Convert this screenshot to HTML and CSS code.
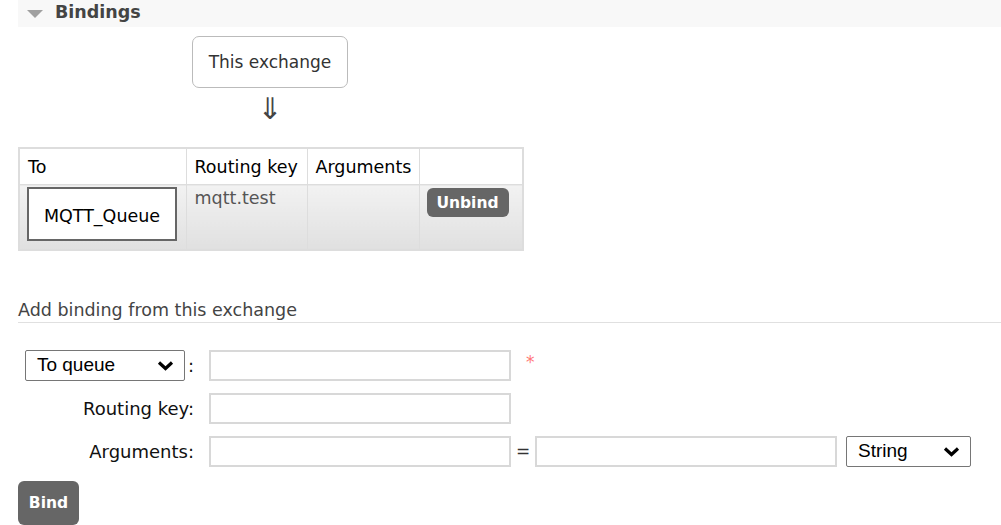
FILE: index.html
```html
<!DOCTYPE html>
<html>
<head>
<meta charset="utf-8">
<link rel="stylesheet" href="styles.css">
</head>
<body>
<div class="page">
  <div class="section-header">
    <span class="tri"></span>
    <h2>Bindings</h2>
  </div>
  <div class="diagram">
    <div class="this-exchange">This exchange</div>
    <div class="arrow">&#8659;</div>
  </div>
  <table class="bindings">
    <colgroup><col class="c-to"><col class="c-key"><col class="c-args"><col class="c-act"></colgroup>
    <thead>
      <tr><th>To</th><th>Routing key</th><th>Arguments</th><th></th></tr>
    </thead>
    <tbody>
      <tr>
        <td class="to-cell"><div class="queue-box">MQTT_Queue</div></td>
        <td class="key">mqtt.test</td>
        <td></td>
        <td class="act"><button class="btn small">Unbind</button></td>
      </tr>
    </tbody>
  </table>
  <h3 class="sub">Add binding from this exchange</h3>
  <div class="form">
    <div class="lbl"><div class="select w160"><span>To queue</span><svg class="chev" width="17" height="11" viewBox="0 0 17 11"><path d="M2 2.5 L8.5 8.5 L15 2.5" fill="none" stroke="#000" stroke-width="3.2"/></svg></div><span class="colon">:</span></div>
    <div class="field"><input class="txt" type="text"><span class="req">*</span></div>
    <div class="lbl">Routing key:</div>
    <div class="field"><input class="txt" type="text"></div>
    <div class="lbl">Arguments:</div>
    <div class="field"><input class="txt" type="text"><span class="eq">=</span><input class="txt" type="text"><div class="select w124"><span>String</span><svg class="chev" width="17" height="11" viewBox="0 0 17 11"><path d="M2 2.5 L8.5 8.5 L15 2.5" fill="none" stroke="#000" stroke-width="3.2"/></svg></div></div>
  </div>
  <button class="btn big">Bind</button>
</div>
</body>
</html>
```
FILE: styles.css
```css
html, body { margin: 0; padding: 0; background: #fff; }
body { font-family: "DejaVu Sans", Verdana, sans-serif; font-size: 17.5px; color: #222; }
.page { padding-left: 18px; }
.section-header { height: 27px; background: #f8f8f8; display: flex; align-items: center; }
.tri { width: 0; height: 0; border-left: 8px solid transparent; border-right: 8px solid transparent; border-top: 8px solid #a0a0a0; margin-left: 9px; margin-right: 12px; margin-top: 1px; }
.section-header h2 { margin: 0; font-size: 17.5px; font-weight: bold; color: #444; line-height: 20px; margin-top: -3px; }
.diagram { display: inline-flex; flex-direction: column; align-items: center; margin-left: 174px; margin-top: 9px; }
.this-exchange { width: 154px; height: 50px; border: 1px solid #bbb; border-radius: 7px; display: flex; align-items: center; justify-content: center; font-size: 17px; color: #333; }
.arrow { font-size: 30px; line-height: 30px; margin-top: 6px; color: #444; }
.bindings { border-collapse: collapse; margin-top: 23px; border: 2px solid #ddd; table-layout: fixed; width: 505px; }
col.c-to { width: 167px; }
col.c-key { width: 121px; }
col.c-args { width: 112px; }
col.c-act { width: 104px; }
.bindings th, .bindings td { border: 1px solid #ddd; text-align: left; font-size: 17.5px; font-weight: normal; color: #000; padding: 0 0 0 8px; white-space: nowrap; overflow: hidden; }
.bindings th { height: 35px; background: #fff; padding-top: 0; }
.bindings td { height: 65px; vertical-align: top; background: linear-gradient(#f2f2f2, #e0e0e0); padding-top: 2px; box-sizing: border-box; }
.bindings td.to-cell { padding: 2px 0 0 7px; }
.bindings td.key { color: #555; padding-top: 3px; }
.bindings td.act { padding: 3px 0 0 7px; }
.queue-box { width: 146px; border: 2px solid #666; background: #fff; display: flex; align-items: center; justify-content: center; font-size: 17.5px; color: #000; padding-top: 3px; box-sizing: content-box; height: 47px; }
.btn { border: none; background: #666; color: #fff; font-family: "DejaVu Sans", Verdana, sans-serif; font-weight: bold; border-radius: 6px; display: block; }
.btn.small { font-size: 15.5px; height: 29px; width: 82px; padding: 0; }
.sub { margin: 49px 0 0 0; font-size: 17.5px; line-height: 21px; font-weight: normal; color: #444; border-bottom: 1px solid #e0e0e0; padding-bottom: 1px; }
.form { display: grid; grid-template-columns: 176px auto; column-gap: 15px; row-gap: 12px; margin-top: 27px; align-items: center; }
.lbl { text-align: right; font-size: 18px; color: #111; display: flex; justify-content: flex-end; align-items: center; }
.field { display: flex; align-items: center; }
.txt { width: 302px; height: 31px; box-sizing: border-box; border: 2px solid #d8d8d8; margin: 0; padding: 0 4px; background: #fff; }
.req { color: #f77; margin-left: 15px; font-size: 17px; margin-top: -6px; }
.eq { width: 24px; text-align: center; font-size: 17px; color: #333; }
.select { box-sizing: border-box; height: 31px; border: 1px solid #767676; border-radius: 2px; display: flex; align-items: center; justify-content: space-between; padding: 0 10px 0 11px; font-family: "Liberation Sans", Arial, sans-serif; font-size: 19px; color: #000; background: #fff; }
.chev { flex-shrink: 0; }
.w160 { width: 160px; }
.w124 { width: 125px; margin-left: 9px; }
.colon { margin-left: 3px; margin-right: 0; }
.btn.big { font-size: 15.5px; height: 44px; width: 61px; padding: 0; margin-top: 14px; }
```
